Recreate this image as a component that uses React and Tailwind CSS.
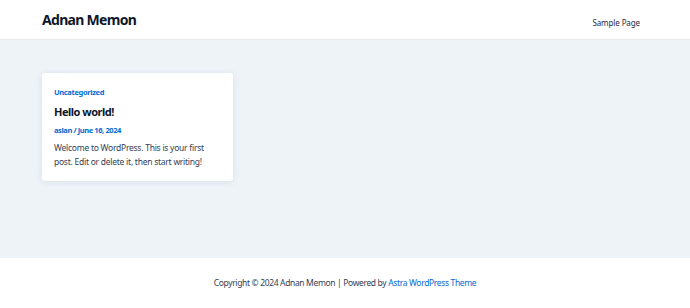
export default function App() {
    return (
        <div className="flex flex-col w-full h-[308px] font-['Noto_Sans',sans-serif] text-[#334155]">
            <header className="flex h-[40px] shrink-0 items-center justify-between px-[42px] bg-white border-b border-[#e5e9ef]">
                <h1 className="text-[14px] font-bold text-[#0f172a] tracking-[-0.7px]">Adnan Memon</h1>
                <nav className="pr-[8px]">
                    <a className="text-[8px] text-[#1e293b] tracking-[-0.1px]">Sample Page</a>
                </nav>
            </header>
            <main className="flex-1 bg-[#eef3f8] px-[42px] pt-[33px]">
                <article className="w-[191px] h-[108px] bg-white rounded-[3px] shadow-[0_1px_6px_rgba(120,140,170,0.18)] px-[12px] pt-[14px]">
                    <p className="text-[7.5px] font-bold text-[#046bd2] leading-[10px] tracking-[-0.35px]">Uncategorized</p>
                    <h2 className="mt-[8px] text-[11px] font-bold text-[#0f172a] leading-[14px] tracking-[-0.5px]">Hello world!</h2>
                    <p className="mt-[6px] text-[7.5px] font-bold text-[#046bd2] leading-[10px] tracking-[-0.4px]">aslan / June 16, 2024</p>
                    <p className="mt-[6px] text-[8.5px] leading-[14px] text-[#334155] tracking-[-0.25px]">Welcome to WordPress. This is your first post. Edit or delete it, then start writing!</p>
                </article>
            </main>
            <footer className="flex h-[50px] shrink-0 items-center justify-center bg-white text-[8.5px] text-[#334155] tracking-[-0.35px]">
                <p>Copyright © 2024 Adnan Memon | Powered by <a className="text-[#046bd2]">Astra WordPress Theme</a></p>
            </footer>
        </div>
    );
}
